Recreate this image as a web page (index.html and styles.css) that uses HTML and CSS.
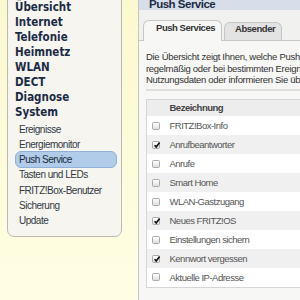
FILE: index.html
```html
<!DOCTYPE html>
<html lang="de">
<head>
    <meta charset="UTF-8">
    <title>Push Service</title>
    <link rel="stylesheet" href="styles.css">
</head>
<body>
    <div class="page">
        <aside class="sidebar">
            <nav class="menu">
                <ul class="menu-main">
                    <li>Übersicht</li>
                    <li>Internet</li>
                    <li>Telefonie</li>
                    <li>Heimnetz</li>
                    <li>WLAN</li>
                    <li>DECT</li>
                    <li>Diagnose</li>
                    <li>System
                        <ul class="menu-sub">
                            <li>Ereignisse</li>
                            <li>Energiemonitor</li>
                            <li class="active">Push Service</li>
                            <li>Tasten und LEDs</li>
                            <li>FRITZ!Box-Benutzer</li>
                            <li>Sicherung</li>
                            <li>Update</li>
                        </ul>
                    </li>
                </ul>
            </nav>
        </aside>

        <main class="content">
            <div class="page-title">Push Service</div>

            <div class="tabs">
                <span class="tab active">Push Services</span>
                <span class="tab">Absender</span>
            </div>

            <div class="panel">
                <p class="intro">Die Übersicht zeigt Ihnen, welche Push Services aktiv sind. Push Services senden Ihnen<br>
                regelmäßig oder bei bestimmten Ereignissen E-Mails mit Informationen zu Ihrer FRITZ!Box, zum Beispiel<br>
                Nutzungsdaten oder informieren Sie über Änderungen der Einstellungen.</p>

                <table class="services">
                    <tr>
                        <th class="col-check"></th>
                        <th>Bezeichnung</th>
                    </tr>
                    <tr><td class="col-check"><span class="check"></span></td><td>FRITZ!Box-Info</td></tr>
                    <tr><td class="col-check"><span class="check on"><svg viewBox="0 0 8 8"><path d="M1.6 4.2 L3.2 6 L6.6 1.4"/></svg></span></td><td>Anrufbeantworter</td></tr>
                    <tr><td class="col-check"><span class="check"></span></td><td>Anrufe</td></tr>
                    <tr><td class="col-check"><span class="check"></span></td><td>Smart Home</td></tr>
                    <tr><td class="col-check"><span class="check"></span></td><td>WLAN-Gastzugang</td></tr>
                    <tr><td class="col-check"><span class="check on"><svg viewBox="0 0 8 8"><path d="M1.6 4.2 L3.2 6 L6.6 1.4"/></svg></span></td><td>Neues FRITZ!OS</td></tr>
                    <tr><td class="col-check"><span class="check"></span></td><td>Einstellungen sichern</td></tr>
                    <tr><td class="col-check"><span class="check on"><svg viewBox="0 0 8 8"><path d="M1.6 4.2 L3.2 6 L6.6 1.4"/></svg></span></td><td>Kennwort vergessen</td></tr>
                    <tr><td class="col-check"><span class="check"></span></td><td>Aktuelle IP-Adresse</td></tr>
                </table>
            </div>
        </main>
    </div>
</body>
</html>
```

FILE: styles.css
```css
* {
    margin: 0;
    padding: 0;
    box-sizing: border-box;
}

body {
    font-family: "Liberation Sans", Arial, sans-serif;
    color: #333;
    overflow: hidden;
}

.page {
    display: flex;
    height: 300px;
    overflow: hidden;
}

/* Sidebar */

.sidebar {
    width: 138px;
    flex-shrink: 0;
    background: linear-gradient(#fbf9cf, #fffee4);
}

.menu {
    width: 115px;
    margin: -10px 0 0 7px;
    padding: 8.5px 0 7px;
    background: #f6f5f0;
    border: 1px solid #b9b9b3;
    border-radius: 0 0 7px 7px;
}

.menu ul {
    list-style: none;
}

.menu-main > li {
    font-family: "DejaVu Sans Condensed", "DejaVu Sans", sans-serif;
    font-size: 11.5px;
    font-weight: bold;
    line-height: 15px;
    color: #1c2b45;
    padding-left: 7px;
}

.menu-sub {
    margin: 2px 0 0 -7px;
}

.menu-sub li {
    font-family: "Liberation Sans", Arial, sans-serif;
    font-size: 10px;
    letter-spacing: -0.5px;
    font-weight: normal;
    line-height: 13.3px;
    color: #333a44;
    margin: 0 4px 0 7px;
    padding-left: 3px;
    border: 1px solid transparent;
    border-radius: 6px;
}

.menu-sub li.active {
    padding: 1px 0 1px 3px;
    margin: -1px 4px -1px 7px;
    background: #b0cce8;
    border-color: #8fb1d6;
    color: #1a2a40;
}

/* Content */

.content {
    flex: 1;
    min-width: 0;
    border-left: 1px solid #c5c5c5;
    background: #f1f1ef;
    overflow: hidden;
}

.page-title {
    height: 10px;
    line-height: 9px;
    padding-left: 10px;
    background: #d6dfe9;
    font-size: 11.5px;
    letter-spacing: -0.5px;
    font-weight: bold;
    color: #1d2c44;
    white-space: nowrap;
    overflow: hidden;
}

.tabs {
    display: flex;
    align-items: flex-end;
    gap: 2px;
    height: 31px;
    padding-left: 4px;
    border-bottom: 1px solid #c8c8c8;
}

.tab {
    font-size: 9.5px;
    letter-spacing: -0.45px;
    font-weight: bold;
    color: #333;
    white-space: nowrap;
    border: 1px solid #c6c6c6;
    border-bottom: none;
    border-radius: 6px 6px 0 0;
}

.tab.active {
    width: 79px;
    height: 21px;
    line-height: 14px;
    margin-bottom: -1px;
    padding-left: 12px;
    background: #f7f7f5;
}

.tab:not(.active) {
    width: 58px;
    height: 18px;
    line-height: 11px;
    padding-left: 10px;
    background: #e3e3e3;
}

.panel {
    background: #f7f7f5;
    padding: 10px 0 20px 7px;
    height: 260px;
}

.intro {
    font-size: 9.5px;
    letter-spacing: -0.3px;
    line-height: 11.5px;
    color: #333;
    white-space: nowrap;
    padding-bottom: 3px;
    border-bottom: 2px solid #dedede;
}

.services {
    margin-top: 8px;
    width: 200px;
    border-collapse: collapse;
    border: 1px solid #d6d6d6;
    font-size: 9.5px;
    letter-spacing: -0.5px;
    white-space: nowrap;
}

.services th {
    height: 17px;
    text-align: left;
    font-weight: bold;
    color: #444;
    background: #ededed;
}

.services td {
    height: 19px;
    color: #555;
    background: #fff;
}

.services tr:nth-child(odd) td {
    background: #f0f0f0;
}

.col-check {
    width: 23px;
    padding-left: 5px;
}

.check {
    display: block;
    width: 8px;
    height: 8px;
    border: 1px solid #a9a9a9;
    border-radius: 1.5px;
    background: linear-gradient(#ffffff, #dedede);
}

.check svg {
    display: block;
    width: 8px;
    height: 8px;
    margin: -1px 0 0 -0.5px;
}

.check path {
    fill: none;
    stroke: #111;
    stroke-width: 1.6;
}
```
